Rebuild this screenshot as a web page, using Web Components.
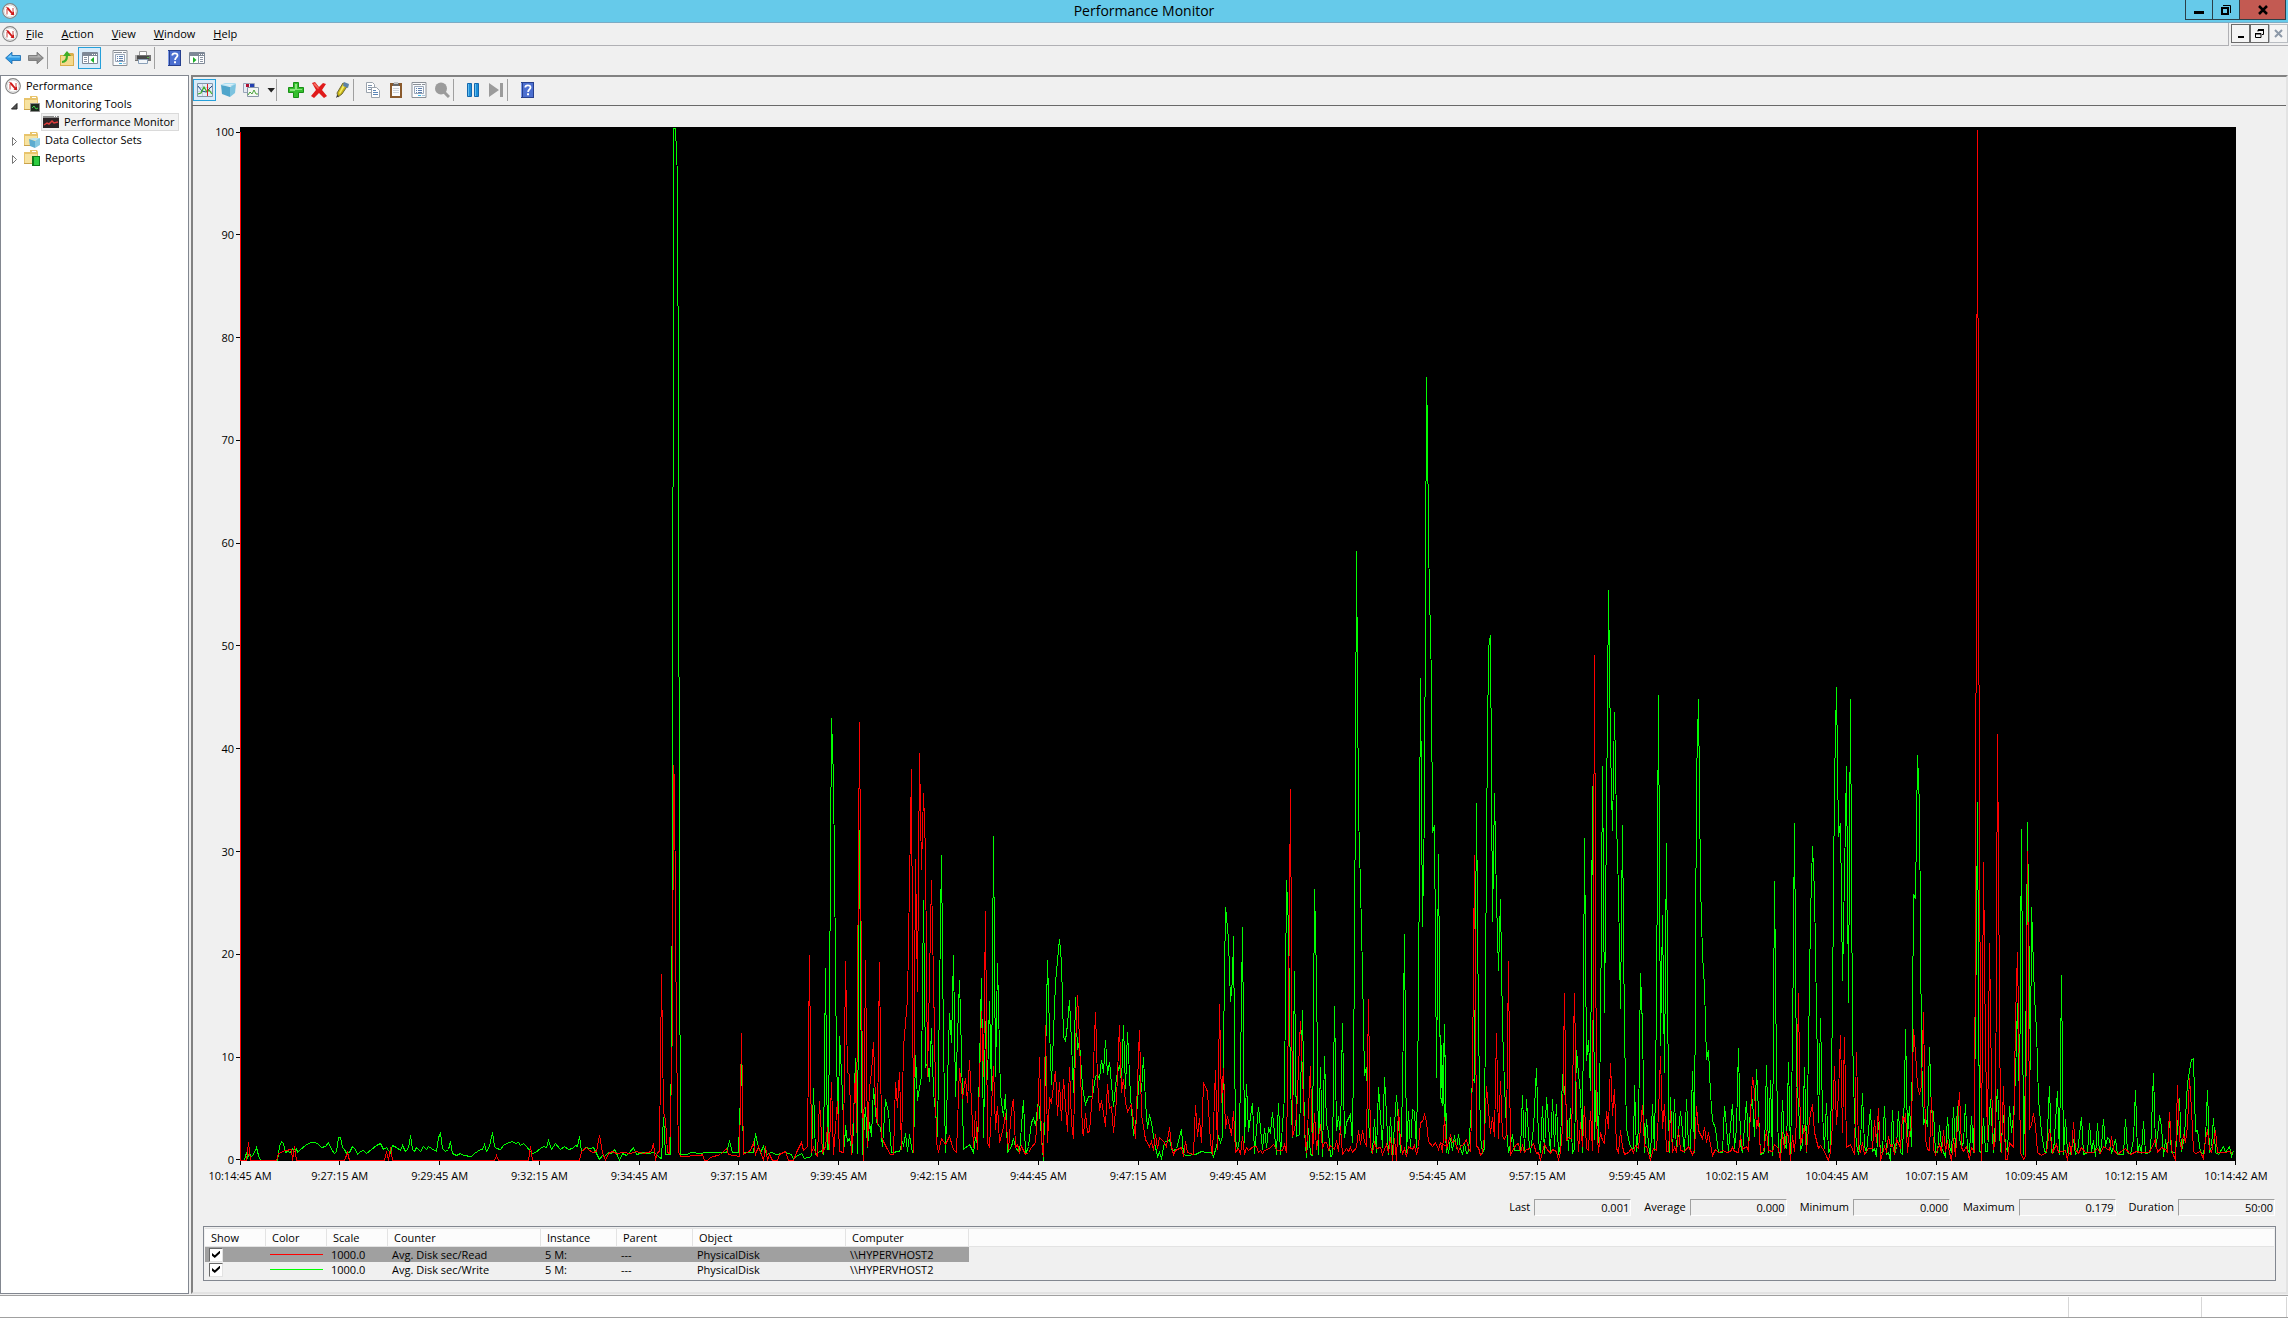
<!DOCTYPE html>
<html lang="en">
<head>
<meta charset="utf-8">
<title>Performance Monitor</title>
<style>
  html, body { margin: 0; height: 100%; }
  body {
    font: 11px/16px "Open Sans", "Noto Sans", sans-serif;
    color: #000;
    background: #f0f0f0;
    --face: #f0f0f0;
    --edge: #828790;
    --hot: #26a0da;
    --hot-fill: #d9ebf9;
  }
</style>
</head>
<body>
<pm-window>
  <pm-title-bar slot="title">Performance Monitor</pm-title-bar>
  <pm-menu-bar slot="menu"></pm-menu-bar>
  <pm-toolbar slot="toolbar" items="back forward | folder-up pane-left* ; props printer | help pane-right"></pm-toolbar>
  <pm-tree slot="tree">
    <pm-tree-item icon="gauge" level="0">Performance</pm-tree-item>
    <pm-tree-item icon="folder-tools" level="1" arrow="open">Monitoring Tools</pm-tree-item>
    <pm-tree-item icon="monitor" level="2" selected>Performance Monitor</pm-tree-item>
    <pm-tree-item icon="folder-sets" level="1" arrow="closed">Data Collector Sets</pm-tree-item>
    <pm-tree-item icon="folder-reports" level="1" arrow="closed">Reports</pm-tree-item>
  </pm-tree>
  <pm-view>
    <pm-toolbar slot="toolbar" items="chart* cube stack caret | plus cross marker | copy clipboard props zoom | pause next | help"></pm-toolbar>
    <pm-chart></pm-chart>
    <pm-stats></pm-stats>
    <pm-legend></pm-legend>
  </pm-view>
  <pm-status-bar slot="status"></pm-status-bar>
</pm-window>

<script>
/* ---------- icons, all on a 16 x 16 grid ---------- */

const FOLDER = `
  <path fill="#e8c46c" d="M0 2h6V0h7l1 2v12H0z"/>
  <path fill="#f7e3a1" d="M1 4h12v9H1z"/>
  <path fill="#c9a24c" d="M0 13h14v1H0z"/>
  <path fill="#fff" d="M8 1h4v1H8z"/>`;

const ICONS = {
  gauge: `
    <circle cx="8" cy="8" r="7.300" fill="#fff" stroke="#858585" stroke-width="1.200"/>
    <circle cx="8" cy="8" r="5.900" fill="none" stroke="#cfcfcf" stroke-width=".8"/>
    <path fill="none" stroke="#c9403c" d="M5 11.500V6M11 11V5"/>
    <path fill="#d01818" d="M4 4l2.500.5 4 5L12 8.500v3.500H8.500l1-1-4-4.500z"/>`,
  back: `
    <path fill="#2f9be6" stroke="#1668ac" stroke-width=".8" d="M.6 8L7 2.2V5.5h8.500v5H7v3.300z"/>
    <path fill="#7fcbf7" d="M2.500 7.600L6.300 4v2.300h8.500v1.300z"/>`,
  forward: `
    <path fill="#8e8e8e" stroke="#6e6e6e" stroke-width=".8" d="M15.400 8L9 2.200V5.500H.5v5H9v3.300z"/>
    <path fill="#b4b4b4" d="M13.500 7.600L9.700 4v2.300H1.200v1.300z"/>`,
  'folder-up': `
    <path fill="#d9ad4a" d="M1 5h5V3h8l1 1v12H1z"/>
    <path fill="#f5d98c" d="M2 6h12v9H2z"/>
    <path fill="none" stroke="#3fae27" stroke-width="2.200" d="M3 12c4 0 5-3 5-7"/>
    <path fill="#3fae27" d="M8 1l4 5H4z"/>`,
  'pane-left': `
    <path fill="#fff" stroke="#7e8896" d="M.5 2.500h15v11H.5z"/>
    <path fill="#7e8896" d="M1 3h14v3H1z"/><path fill="#fff" d="M10 4h1v1h-1zM12 4h1v1h-1zM14 4h1v1h-1z"/>
    <path fill="#8b95a4" d="M2 7h3v1H2zM2 9h3v1H2zM2 11h3v1H2zM6 6h1v8H6z"/>
    <path fill="#1fae2a" d="M12 7v6L8.500 10z"/>`,
  'pane-right': `
    <path fill="#fff" stroke="#7e8896" d="M.5 2.500h15v11H.5z"/>
    <path fill="#7e8896" d="M1 3h14v3H1z"/><path fill="#fff" d="M10 4h1v1h-1zM12 4h1v1h-1zM14 4h1v1h-1z"/>
    <path fill="#8b95a4" d="M11 7h3v1h-3zM11 9h3v1h-3zM11 11h3v1h-3zM9 6h1v8H9z"/>
    <path fill="#1fae2a" d="M4 7v6l3.500-3z"/>`,
  props: `
    <path fill="#fafcfe" stroke="#8b9097" d="M1 .5h14v15H1z"/>
    <path fill="#8b9097" d="M2 2h8v1H2zM11 2h3v1h-3z"/>
    <path fill="none" stroke="#9aa7b8" d="M3.500 4.500h9v7h-9z"/>
    <path fill="#5c7fae" d="M5 6h1v1H5zM7 6h4v1H7zM5 8h1v1H5zM7 8h4v1H7zM5 10h1v1H5zM7 10h4v1H7z"/>
    <path fill="#37b9ea" d="M7 13h3v1H7z"/><path fill="#a8c4d8" d="M11 13h3v1h-3z"/>`,
  printer: `
    <path fill="#fff" stroke="#9a9a9a" d="M4.500 1.500h7v4h-7z"/>
    <path fill="#747474" d="M0 5h16v6H0z"/><path fill="#4a4a4a" d="M2 6h12v3H2z"/>
    <path fill="#a9a9a9" d="M0 5h2v5H0z"/>
    <path fill="#f2f6fa" stroke="#8aa0b8" d="M3.500 9.500h9v4h-9z"/><path fill="#58b04a" d="M12 7h2v1h-2z"/>`,
  help: `
    <path fill="#27408f" d="M2 0h13v16H2z"/><path fill="#4c6fd0" d="M4 1h10v14H4z"/>
    <path fill="#7b98e6" d="M2 1h1v14H2z"/>
    <path fill="none" stroke="#fff" stroke-width="1.800" d="M6.300 5.600c0-3 5.200-3 5.200-.2 0 2-2.400 2-2.400 4.600"/>
    <path fill="#fff" d="M8 11.300h2v2H8z"/>`,
  chart: `
    <path fill="#e3edf5" stroke="#8297ab" d="M.5 1.500h15v13H.5z"/>
    <path stroke="#c3d1dd" d="M1 5.500h14M1 9.500h14M5.500 2v12"/>
    <path fill="none" stroke="#234b8f" d="M1 4l4 5 4 1 6-6"/>
    <path fill="none" stroke="#3fae27" stroke-width="1.200" d="M1 12l3-1 3-6 3 5 2-2 3 4"/>
    <path fill="#e02020" d="M10 2h1v12h-1z"/>`,
  cube: `
    <path fill="#a9dcf0" d="M0 3l5-2h11l-2 3H3z"/><path fill="#4fa5cb" d="M1 3l9 2v10l-8-3z"/>
    <path fill="#7cc3df" d="M10 5l6-3-1 9-5 4z"/><path fill="#d7eff8" d="M1 3l5-1h8l-4 2z"/>`,
  stack: `
    <path fill="#e6ebf3" stroke="#98a5b8" d="M.5 1.500h11v9H.5z"/>
    <path fill="#b01030" d="M3 2h3v3H3z"/><path fill="#2440b0" d="M7 2h4v3H7z"/>
    <path fill="#f4f7f2" stroke="#8a97a8" d="M4.500 5.500h11v9h-11z"/>
    <path fill="none" stroke="#4aa53a" d="M5 13l2-3 2 2 2-4 2 4h2"/>`,
  caret: `<path fill="#222" d="M4.500 6h7.500L8.200 10.500z"/>`,
  plus: `
    <path fill="#35c02d" stroke="#198f16" d="M5.500 .5h5v5h5v5h-5v5h-5v-5h-5v-5h5z"/>
    <path fill="#8be67e" d="M7 2h2v5h5v1H7v1H2V7h5z"/>`,
  cross: `
    <path fill="#e01b1b" d="M1 1l3-1 4 5 4-4 3 1-4 6 5 6-3 2-5-5-5 5-3-2 5-6z"/>
    <path fill="#f36a5f" d="M2 2l2-1 4 5-1 1z"/>`,
  marker: `
    <path fill="#c8b414" stroke="#6d6a3c" d="M9 1l5 2-6 9-4 3-1-4z"/>
    <path fill="#f4ea62" d="M9 3l2 1-5 8-1-1z"/><path fill="#5d82a8" d="M10 0l5 2-1 4-5-2z"/>
    <path fill="#333" d="M3 13l2 1-3 2z"/>`,
  copy: `
    <path fill="#fff" stroke="#9aa3ad" d="M1.500 .5h6l2 2v8h-8z"/>
    <path fill="#7d93ad" d="M3 3h4v1H3zM3 5h5v1H3zM3 7h5v1H3z"/>
    <path fill="#fff" stroke="#9aa3ad" d="M6.500 5.500h5l3 3v7h-8z"/>
    <path fill="#5b86b8" d="M8 8h3v1H8zM8 10h5v1H8zM8 12h5v1H8z"/>`,
  clipboard: `
    <path fill="#8a5a2c" d="M2 1h12v15H2z"/><path fill="#fbfbfb" d="M4 4h8v10H4z"/>
    <path fill="#6b6b6b" d="M5 1h6v3H5z"/><path fill="#c4c4c4" d="M6 0h4v2H6z"/>
    <path fill="#cdd3da" d="M5 6h6v1H5zM5 8h6v1H5zM5 10h6v1H5z"/>`,
  zoom: `
    <circle cx="7" cy="6.500" r="6" fill="#9b9b9b"/><path stroke="#9b9b9b" stroke-width="3" d="M10 10l5 5"/>`,
  pause: `
    <path fill="#1e8fd8" stroke="#1468ad" d="M2.500 1.500h4v13h-4zM9.500 1.500h4v13h-4z"/>
    <path fill="#63bdf0" d="M3 2h1v12H3zM10 2h1v12h-1z"/>`,
  next: `<path fill="#9b9b9b" d="M1 1l10 7-10 7zM12 1h3v14h-3z"/>`,
  monitor: `
    <path fill="#2c2426" d="M0 2h16v12H0z"/><path fill="#8c8c8c" d="M0 2h16v2H0z"/>
    <path fill="#fff" d="M11 2h1v1h-1zM13 2h1v1h-1z"/>
    <path fill="none" stroke="#e23b3b" stroke-width="1.500" d="M1 11l3-2 2 1 3-3 2 2 4-1"/>`,
  'folder-tools': FOLDER + `
    <path fill="#1c2a1e" stroke="#8a8a8a" d="M6.500 7.500h9v8h-9z"/>
    <path fill="none" stroke="#41d24d" d="M8 12l2-2 2 3 2-1"/>`,
  'folder-sets': FOLDER + `
    <path fill="#bfe4f2" d="M5 7l4-1h7l-3 3z"/><path fill="#5cacd0" d="M5 7l6 2v7l-5-2z"/>
    <path fill="#86c9e2" d="M11 9l5-3v7l-5 3z"/>`,
  'folder-reports': FOLDER + `
    <path fill="#0c7a18" d="M8 6h8v10H8z"/><path fill="#2ecc40" d="M10 7h5v8h-5z"/>`
};

class PmIcon extends HTMLElement {
  connectedCallback() {
    this.attachShadow({ mode: 'open' }).innerHTML = `
      <style>
        :host { display: block; width: 16px; height: 16px; flex: none; }
        svg { display: block; }
      </style>
      <svg width="16" height="16" viewBox="0 0 16 16" aria-hidden="true">${ICONS[this.getAttribute('name')]}</svg>
    `;
  }
}

/* ---------- window frame ---------- */

class PmWindow extends HTMLElement {
  connectedCallback() {
    this.attachShadow({ mode: 'open' }).innerHTML = `
      <style>
        :host { display: flex; flex-direction: column; height: 100vh; overflow: hidden; }
        .body { flex: 1; min-height: 0; display: flex; gap: 2px; }
        ::slotted(pm-tree) { flex: none; }
        ::slotted(pm-view) { flex: 1; min-width: 0; }
      </style>
      <slot name="title"></slot>
      <slot name="menu"></slot>
      <slot name="toolbar"></slot>
      <div class="body">
        <slot name="tree"></slot>
        <slot></slot>
      </div>
      <slot name="status"></slot>
    `;
  }
}

class PmTitleBar extends HTMLElement {
  connectedCallback() {
    this.attachShadow({ mode: 'open' }).innerHTML = `
      <style>
        :host {
          display: grid; grid-template-columns: 1fr auto 1fr;
          height: 22px; background: #66caea; border-bottom: 1px solid #7cabc4;
        }
        pm-icon { margin: 3px 0 0 2px; }
        h1 { margin: 0; font-size: 14px; line-height: 22px; font-weight: 400; }
        .controls { display: flex; justify-content: flex-end; margin-right: 2px; height: 20px; }
        button {
          width: 28px; padding: 0; margin-left: -1px; border: 1px solid #2b3f48; border-top: 0;
          background: none; display: grid; place-items: center;
        }
        .close { width: 47px; background: #c35a52; }
      </style>
      <pm-icon name="gauge"></pm-icon>
      <h1><slot></slot></h1>
      <div class="controls">
        <button aria-label="Minimize"><svg width="12" height="12"><path d="M1 7h10v3H1z"/></svg></button>
        <button aria-label="Restore"><svg width="12" height="12"><path fill="none" stroke="#000" stroke-width="2" d="M2 4h6v6H2z"/><path fill="none" stroke="#000" d="M3 1.500h7.500V9"/></svg></button>
        <button class="close" aria-label="Close"><svg width="12" height="12"><path stroke="#000" stroke-width="2.500" d="M2 2l8 8M10 2l-8 8"/></svg></button>
      </div>
    `;
  }
}

class PmMenuBar extends HTMLElement {
  connectedCallback() {
    const items = ['File', 'Action', 'View', 'Window', 'Help'];
    this.attachShadow({ mode: 'open' }).innerHTML = `
      <style>
        :host { display: flex; gap: 2px; height: 23px; }
        .menu { flex: 1; display: flex; gap: 18px; align-items: center; padding-left: 2px;
                border: solid #b0b0b4; border-width: 0 1px 1px 0; }
        pm-icon { margin-right: -10px; }
        button { font: inherit; color: inherit; padding: 0; border: 0; background: none; }
        .mdi { display: flex; border-bottom: 1px solid #b0b0b4; padding-top: 1px; }
        .mdi button { box-sizing: border-box; width: 19px; height: 19px; border: 1px solid #6b6b6b;
                      background: #f4f4f4; display: grid; place-items: center; }
        .mdi button:last-child { border-color: #b9bdc2; }
      </style>
      <div class="menu">
        <pm-icon name="gauge"></pm-icon>
        ${items.map(t => `<button><u>${t[0]}</u>${t.slice(1)}</button>`).join('')}
      </div>
      <div class="mdi">
        <button aria-label="Minimize child"><svg width="9" height="9"><path d="M2 7h6v2H2z"/></svg></button>
        <button aria-label="Restore child"><svg width="9" height="9"><path fill="none" stroke="#000" d="M3 2.500V1h5.500v4.500H7M.5 4.500h5.500v4H.5z"/><path d="M3 0h6v2H3zM0 4h6v1.500H0z"/></svg></button>
        <button aria-label="Close child"><svg width="9" height="9"><path stroke="#8d99a8" stroke-width="2" d="M1 1l7 7M8 1L1 8"/></svg></button>
      </div>
    `;
  }
}

// items: icon names, "*" marks a pressed button, "|" a rule and ";" a blank gap
class PmToolbar extends HTMLElement {
  connectedCallback() {
    const cells = this.getAttribute('items').split(' ').map(item => {
      if (item === '|') return '<i class="rule"></i>';
      if (item === ';') return '<i class="gap"></i>';
      const name = item.replace('*', '');
      const cls = item.endsWith('*') ? 'on' : name === 'caret' ? 'caret' : '';
      return `<button class="${cls}" aria-label="${name}"><pm-icon name="${name}"></pm-icon></button>`;
    });
    this.attachShadow({ mode: 'open' }).innerHTML = `
      <style>
        :host { display: flex; align-items: flex-start; padding: 1px 0 6px 1px; height: 22px; }
        button { box-sizing: border-box; width: 23px; height: 22px; padding: 0; border: 1px solid transparent;
                 background: none; display: grid; place-items: center; flex: none; }
        .on { border-color: var(--hot); background: var(--hot-fill); }
        .caret { width: 14px; overflow: hidden; }
        .rule { width: 1px; height: 22px; margin-right: 7px; background: #a0a0a0; }
        .gap { width: 7px; }
      </style>
      ${cells.join('')}
    `;
  }
}

class PmStatusBar extends HTMLElement {
  connectedCallback() {
    this.attachShadow({ mode: 'open' }).innerHTML = `
      <style>
        :host { display: flex; height: 20px; margin-top: 1px; border: solid #a0a0a0; border-width: 1px 0;
                background: #fff; padding: 1px 1px 0 0; }
        span { border-right: 1px solid #d7d7d7; }
        .wide { flex: 1; } .mid { width: 132px; } .end { width: 84px; }
      </style>
      <span class="wide"></span><span class="mid"></span><span class="end"></span>
    `;
  }
}

/* ---------- console tree ---------- */

class PmTree extends HTMLElement {
  connectedCallback() {
    this.setAttribute('role', 'tree');
    this.attachShadow({ mode: 'open' }).innerHTML = `
      <style>
        :host { display: block; box-sizing: border-box; width: 189px; padding-top: 1px;
                background: #fff; border: 1px solid var(--edge); }
      </style>
      <slot></slot>
    `;
  }
}

class PmTreeItem extends HTMLElement {
  connectedCallback() {
    this.setAttribute('role', 'treeitem');
    const arrow = {
      open: '<path fill="#555" stroke="#222" d="M7 3.500V9H1.500z"/>',
      closed: '<path fill="#fff" stroke="#777" d="M2.500 1.500v8l4-4z"/>'
    }[this.getAttribute('arrow')] || '';
    const indent = [0, 19, 38][this.getAttribute('level')];
    this.attachShadow({ mode: 'open' }).innerHTML = `
      <style>
        :host { display: flex; align-items: center; height: 18px; padding-left: ${indent}px; }
        svg { margin: 3px 0 0 -10px; width: 10px; flex: none; }
        .row { display: flex; align-items: center; gap: 5px; box-sizing: border-box; height: 18px;
               padding: 0 3px 0 1px; margin-left: 2px; border: 1px solid transparent; white-space: nowrap; }
        :host([selected]) .row { background: #f2f2f2; border-color: #dadada; }
      </style>
      ${arrow && `<svg width="10" height="11">${arrow}</svg>`}
      <div class="row"><pm-icon name="${this.getAttribute('icon')}"></pm-icon><slot></slot></div>
    `;
  }
}

/* ---------- monitor view ---------- */

class PmView extends HTMLElement {
  connectedCallback() {
    this.attachShadow({ mode: 'open' }).innerHTML = `
      <style>
        :host { display: flex; flex-direction: column; box-sizing: border-box; border: 2px solid;
                border-color: #828282 #e3e3e3 #e3e3e3 #828282; }
        header { border-bottom: 1px solid #696969; padding-top: 1px; height: 27px; margin-left: -1px; }
        ::slotted(pm-chart) { flex: 1; min-height: 0; }
      </style>
      <header><slot name="toolbar"></slot></header>
      <slot></slot>
    `;
  }
}

/*
 * Samples of both counters, one block per stretch of the recording.
 * x: where the block starts on the plot, base: the block's zero level,
 * unit: block units per pixel of height. Across, there are 3 units per pixel.
 */
const BLOCKS = [
  { x: -50, base: 94, unit: 3,
    write: `163,94 168,70 173,86 178,74 184,82 190,76 199,55 206,80 211,94 262,94 268,52 273,37 280,42 286,70 292,66 300,70 306,58 313,68
      318,58 323,70 330,62 345,48 362,41 375,40 384,46 395,56 405,52 416,40 425,62 434,72 440,68 445,26 451,26 457,54 463,60 470,72
      478,70 487,53 495,60 502,75 510,68 520,64 528,72 545,60 560,48 570,42 580,62 590,56 600,74 608,50 618,54 630,64 638,50 645,66
      652,62 657,42 661,20 666,60 674,66 680,56 690,66 700,52 708,60 715,52 725,58 738,66 744,24 752,14 757,58 765,66 775,62 782,36
      788,74 800,78 810,72 820,78 845,82 852,72 862,68 870,60 876,62 884,46 890,66 898,52 907,10 913,52 920,58 930,62 940,50 950,42
      966,38 975,42 985,40 992,48 1000,44 1010,52 1020,66 1026,74 1035,70 1050,58 1060,52 1068,56 1076,34 1084,60 1096,44 1110,62
      1122,52 1134,60 1146,58 1155,48 1162,52 1168,22 1174,66 1186,54 1200,58 1210,56 1220,72 1228,92 1236,80 1244,82 1254,70 1264,74
      1274,60 1282,78 1289,94 1298,74 1308,78 1318,70 1330,56 1340,76 1352,74 1364,70 1376,74 1390,70 1400,76 1408,84`,
    read: `151,94 168,94 176,40 181,94 260,94 266,74 285,64 303,62 307,94 313,52 320,94 464,94 471,70 478,94 584,94 590,68 595,94 601,54
      607,94 913,94 919,80 926,94 1015,94 1021,52 1027,94 1168,94 1174,68 1188,56 1196,60 1206,70 1220,66 1228,18 1236,70 1246,94
      1254,72 1266,66 1280,72 1300,70 1320,74 1340,68 1360,72 1384,68 1390,42` },
  { x: 380, base: 1443, unit: 3,
    write: `124,1436 130,1310 136,1426 152,1426 156,600 159,-1656 165,-1656 171,-1509 174,-740 177,700 180,1426 200,1424 215,1420
      240,1422 255,1420 300,1418 318,1420 328,1386 338,1420 355,1420 364,1152 370,1420 400,1420 407,1362 414,1404 422,1420 430,1400
      440,1424 455,1418 470,1424 495,1420 515,1424 520,1440 528,1430 545,1422 553,1436 575,1430 580,1224 586,1426 605,1414 610,1424
      616,864 622,1410 626,1410 634,114 640,300 644,560 650,1150 654,1320 658,1068 664,1180 673,1400 676,1338 682,1385 688,1378
      697,1418 706,1135 712,1422 718,450 721,920 726,1424 736,1282 742,1405 749,1330 755,1370 760,1225 768,1330 780,1345 788,1400
      797,1260 806,1296 815,1420 838,1415 846,1386 850,1400 856,1362 862,1415 868,1366 876,1418 880,1418 886,1126 893,1264 904,1190
      910,660 916,1164 922,1150 928,1206 934,1045 940,1240 946,1295 952,1372 964,525 970,1098 976,1418 988,1000 994,1090 1000,825
      1006,1252 1018,900 1024,1120 1030,1410 1048,1394 1060,1420 1066,1375 1072,1395 1076,1290 1084,894 1090,1375 1096,1022 1102,1200
      1108,964 1114,1234 1120,468 1126,1190 1132,850 1140,1245 1150,1310 1156,1242 1162,1418 1174,1400 1180,1378 1186,1405 1198,1420
      1210,1260 1216,1424 1226,1400 1234,1330 1240,1318 1246,1338 1254,1260`,
    read: `106,1444 112,1418 118,1416 124,882 130,1300 136,1320 142,1418 148,1422 152,1326 156,1030 160,255 164,310 168,1100 174,1416
      180,1430 240,1428 248,1425 253,1443 263,1443 270,1434 300,1424 318,1406 325,1424 358,1430 364,1059 370,1424 390,1412 400,1388
      406,1424 415,1400 424,1424 431,1443 437,1400 443,1443 449,1424 457,1443 471,1443 478,1424 495,1416 504,1443 520,1443 530,1418
      544,1390 550,1414 563,1400 568,825 574,1418 580,1404 592,1430 599,1264 606,1420 616,1400 623,1345 628,1410 634,1206 640,1424
      652,1264 658,1415 670,1420 676,843 682,1180 688,1186 694,1424 706,1178 710,1360 718,126 724,920 730,1444 736,840 742,1400
      748,1225 755,1180 760,1086 766,1265 772,1335 778,846 784,1370 790,1385 800,1405 812,1424 820,1424 827,1206 832,1285 838,1176
      844,1410 850,1100 862,960 874,267 880,1420 886,537 892,936 898,219 904,570 910,339 916,520 922,1190 934,600 940,900 948,1390
      956,1418 965,1378 976,1395 988,1370 1000,1410 1008,1418 1018,1164 1028,1258 1036,1195 1042,1270 1048,1140 1060,1405 1066,1294
      1072,1410 1084,994 1090,1190 1096,693 1102,1390 1108,1405 1120,1158 1126,1350 1132,1278 1138,1388 1150,1345 1156,1302 1164,1410
      1174,1290 1180,1258 1186,1405 1192,1395 1198,1418 1204,1400 1215,1424 1225,1420 1234,1405 1246,1390 1254,1260` },
  { x: 790, base: 1443, unit: 3,
    write: `29,1300 40,1444 46,1150 52,840 58,1050 64,1215 76,910 88,778 94,850 100,1070 106,1084 112,1035 118,960 124,1090 130,1238
      136,950 142,1110 148,1085 156,1220 166,1275 176,1252 186,1250 196,1190 202,1184 208,1200 214,1140 220,1178 226,1080 232,1185
      238,1145 250,1282 258,1195 268,1155 274,1210 280,1036 286,1228 292,1056 300,1250 310,1368 318,1310 328,1184 334,1236 340,1132
      346,1270 352,1348 358,1305 364,1330 374,1390 382,1430 388,1418 394,1436 404,1390 418,1380 428,1416 440,1408 454,1350 460,1424
      470,1428 495,1426 515,1416 530,1420 544,1418 550,1432 560,1400 566,1370 570,1390 576,1370 580,1100 587,682 594,780 600,966
      606,900 610,768 616,1380 622,1410 628,1380 637,742 643,1390 649,1212 656,1355 667,1270 673,1422 685,1282 697,1410 703,1348
      709,1405 716,1346 721,1360 728,1298 739,1426 745,1268 751,1426 763,1250 770,600 776,740 781,1220 787,1375 794,874 800,1370
      808,1365 817,990 823,1355 829,1434 835,1348 841,1424 847,1428 854,628 860,890 866,1426 872,1160 878,1430 884,1128 890,1335
      896,1356 902,1432 907,1428 913,978 919,1352 925,1310 931,1365 938,1030 944,1375 950,1330 962,1306 968,1388 974,860 979,-387
      986,400 992,620 998,880 1004,1188 1009,1160 1015,1330 1024,1418 1027,1415 1033,1318 1039,1418 1046,1220 1058,1405 1064,1190
      1076,1426 1082,1312 1088,1426 1100,1245 1112,1418 1118,1240 1123,762 1128,1418 1136,1294 1142,1408 1148,1290 1154,1296
      1160,1404 1166,980 1171,-6 1177,740 1183,390 1189,-909 1192,-750 1195,-432 1198,-240 1201,-150 1204,20 1207,460 1213,435
      1220,1195 1225,522 1231,1250 1237,1275 1243,1032 1249,1420`,
    read: `28,1131 34,1385 40,1430 47,1036 53,1390 59,1258 64,1270 76,1174 82,1308 88,1206 94,1322 100,1197 112,1356 118,1161 124,1330
      130,1378 136,1100 142,945 148,1080 156,1358 160,1366 166,1302 172,1360 178,1355 187,1240 196,996 202,1200 208,1294 214,1262
      226,1342 232,1212 238,1288 244,1280 250,1360 258,1260 268,1036 274,1240 280,1198 286,1268 292,1296 304,1276 316,1378 322,1210
      328,1050 334,1305 346,1380 358,1400 364,1385 370,1412 376,1366 382,1408 388,1375 400,1386 408,1400 418,1345 424,1400 430,1426
      436,1412 454,1405 460,1430 466,1386 472,1420 490,1426 496,1275 502,1370 508,1318 514,1390 520,1210 532,1236 542,1390 548,1426
      556,1170 562,1410 568,972 574,1270 580,1165 586,1348 592,1310 603,1368 610,1294 617,1418 626,1408 631,1425 637,1372 643,1426
      650,1405 656,1412 670,1400 678,1400 686,1420 692,1412 698,1422 704,1412 718,1408 730,1396 742,1412 757,1412 763,1394 769,1420
      775,1000 781,327 787,1370 793,1350 800,1310 811,1023 823,1350 830,1418 841,1158 847,1424 853,1300 859,1410 870,1335 876,1408
      884,1390 890,1388 896,1410 902,1398 914,1410 920,1382 926,1415 932,1342 938,1424 950,1406 956,1415 962,1405 968,1418 978,1405
      985,1354 991,1394 997,1352 1003,1385 1009,1400 1015,957 1021,1400 1027,1420 1033,1388 1040,1408 1050,1405 1058,1424 1070,1396
      1076,1418 1082,1375 1088,1444 1094,1378 1100,1444 1106,1288 1112,1385 1118,1424 1124,1408 1130,1430 1136,1402 1148,1410
      1154,1398 1160,1426 1166,1400 1171,1330 1177,1325 1183,1305 1189,1325 1196,1385 1208,1402 1215,1390 1225,1410 1231,1390
      1237,1420 1243,1312 1249,1400` },
  { x: 1200, base: 1520, unit: 2.53,
    write: `1,1200 7,1380 13,1173 19,1470 25,1502 31,1465 37,1495 43,1458 49,1490 55,1455 61,1490 67,1505 73,1478 80,1503 86,1500 92,1420
      97,1310 103,1322 109,615 115,1185 121,1460 127,1500 132,1490 139,700 146,225 151,190 157,916 163,590 169,860 176,1040 181,856
      187,1180 193,1330 199,1440 205,1500 211,1480 217,1455 223,1495 241,1495 247,1352 253,1500 259,1363 266,1460 272,1500 280,1440
      288,1284 295,1470 301,1500 307,1382 313,1502 319,1357 331,1500 337,1362 343,1484 349,1375 355,1505 361,1480 367,1300 373,1340
      380,1390 386,1495 392,1385 398,1502 403,1490 409,1238 415,1300 421,1350 427,1500 433,702 439,1268 446,1215 451,1343 457,572
      463,1466 469,1300 475,1475 481,1210 487,520 493,1145 499,650 505,76 511,470 517,684 523,384 529,660 535,840 541,1135 547,670
      553,1200 560,1440 568,1478 574,1490 580,1490 583,1328 589,1498 595,1440 601,1045 607,1180 613,1500 619,1415 625,1480 631,1510
      637,1375 643,1495 649,1125 655,341 661,1228 667,898 673,1298 679,716 685,1390 688,1500 691,1357 697,1500 703,1362 710,1500
      721,1393 733,1500 739,1362 746,1485 751,1490 757,1293 763,1500 769,550 775,350 781,820 787,1000 793,1080 799,1265 805,1240
      811,1350 817,1420 825,1440 835,1500 848,1500 854,1382 866,1495 877,1376 884,1490 889,1440 895,1235 901,1480 908,1500 919,1368
      925,1490 931,1385 937,1365 943,1460 949,1287 961,1505 973,1500 979,1278 985,1500 991,1315 997,1508 1003,812 1009,1290 1015,1500
      1022,1500 1027,1366 1033,1480 1039,1490 1045,1270 1051,1505 1057,1230 1063,665 1069,1320 1075,1375 1081,1495 1087,1480
      1093,1282 1099,1500 1105,1240 1111,900 1117,722 1123,840 1129,1140 1135,1425 1141,1158 1147,1400 1153,1490 1159,1374 1165,1500
      1171,1490 1177,1120 1183,560 1189,321 1195,700 1201,664 1207,1065 1213,800 1219,520 1225,1120 1231,352 1237,1200 1243,1410
      1249,1480 1255,1505`,
    read: `1,1475 7,1500 13,1410 19,1490 31,1458 37,1475 43,1470 55,1498 61,1485 70,1480 79,1468 85,1490 92,1498 97,1300 103,745 109,1485
      115,1488 121,1508 128,1500 134,1460 139,1330 145,1390 151,1452 157,1412 163,1460 169,1196 175,1465 181,1317 187,1460 193,1468
      199,1455 205,1014 211,1508 220,1490 229,1480 235,1476 241,1500 247,1482 253,1500 260,1492 272,1490 280,1478 288,1502 295,1500
      301,1520 313,1480 320,1490 332,1502 338,1492 350,1498 356,1520 362,1498 368,1440 373,1095 379,1470 386,1463 395,1465 404,1095
      409,1390 415,1498 421,1425 427,1485 433,1382 440,1490 446,1495 451,1394 457,1495 463,240 470,1420 475,1500 480,1450 487,1470
      493,1478 499,1397 505,1440 511,1272 517,1405 523,1338 530,1490 536,1500 541,1445 547,1485 553,1505 566,1500 574,1490 580,1500
      587,1482 595,1490 601,1440 607,1378 613,1485 620,1485 631,1520 640,1490 649,1495 655,1400 661,1255 667,1440 673,1376 679,1498
      685,1498 691,1390 697,1500 703,1488 710,1498 716,1442 722,1495 733,1498 746,1485 757,1505 763,1495 769,1382 775,1445 787,1465
      793,1437 799,1475 805,1450 811,1480 818,1508 826,1492 835,1500 850,1495 860,1500 870,1496 878,1488 884,1498 895,1500 901,1458
      907,1492 919,1484 925,1494 931,1400 937,1308 943,1345 949,1440 955,1412 961,1502 970,1498 979,1443 985,1495 997,1498 1004,1480
      1015,1490 1021,1520 1027,1450 1033,1490 1039,1450 1045,1460 1051,1520 1057,1458 1063,1498 1069,1420 1075,1095 1081,1480
      1087,1460 1093,1432 1099,1498 1105,1440 1111,1400 1117,1378 1123,1450 1135,1490 1141,1482 1153,1498 1159,1510 1165,1520
      1171,1500 1177,1430 1183,1280 1189,1430 1195,1350 1201,1200 1207,1448 1213,1206 1219,1487 1231,1480 1243,1505 1249,1244` },
  { x: 1600, base: 1503, unit: 3,
    write: `56,1485 62,1450 67,1300 73,1460 79,1480 91,1348 97,1475 104,1466 110,1490 115,1385 121,1480 127,1480 133,1338 139,1485
      146,1480 151,1503 157,1350 163,1485 169,1460 175,1353 181,1480 187,1486 193,1300 196,1107 202,1430 208,1338 214,1460 220,703
      226,718 232,285 238,440 243,1180 250,1395 256,1375 262,1400 268,1161 274,1360 280,1355 286,1480 292,1480 298,1398 304,1465
      310,1480 316,1490 322,1372 328,1460 334,1480 340,1342 346,1470 352,1338 358,1440 364,1460 370,1450 376,1332 382,1470 388,1480
      394,1368 400,1480 404,1335 409,820 412,426 418,1475 424,1480 430,1374 436,1475 442,1475 452,1318 460,1480 472,1287 480,1475
      490,1365 496,1460 502,1475 508,1338 514,1420 520,1368 526,1250 533,1030 537,1340 545,507 551,1485 556,1250 562,486 570,1230
      575,741 582,1010 590,1110 596,1320 604,1420 612,1475 620,1478 628,1278 634,1480 640,1478 652,1293 658,1485 664,945 670,1485
      676,1377 682,1480 692,1485 700,1440 706,1485 712,1480 724,1372 730,1485 742,1480 748,1390 754,1480 760,1444 766,1490 772,1390
      778,1482 784,1460 791,1377 797,1460 802,1435 808,1440 815,1482 826,1440 832,1485 850,1485 857,1377 863,1480 870,1485 880,1440
      887,1290 893,1480 898,1455 904,1482 911,1384 917,1482 930,1480 941,1240 947,1460 953,1430 959,1368 965,1400 970,1490 977,1440
      983,1475 989,1380 995,1480 1005,1480 1010,1450 1018,1315 1024,1475 1032,1430 1042,1270 1054,1200 1060,1197 1066,1415 1072,1412
      1080,1478 1090,1482 1096,1440 1102,1290 1108,1478 1114,1460 1120,1374 1126,1480 1136,1486 1150,1460 1156,1480 1168,1460
      1174,1490 1181,1472`,
    read: `55,1470 61,1478 67,1450 73,1485 85,1468 98,1468 103,1384 109,1450 115,1344 121,1503 133,1460 139,1475 145,1432 151,1460
      157,1456 163,1485 169,1440 181,1465 187,1372 193,1385 196,1358 202,1480 208,1420 214,1400 220,1107 226,1180 232,1280 238,1303
      243,1280 250,1056 256,1440 262,1470 268,1472 274,1311 280,1470 286,1485 298,1455 304,1480 310,1413 316,1475 322,1444 328,1480
      334,1503 340,1438 346,1492 358,1297 364,1465 370,1475 380,1462 388,1500 394,1465 404,1478 407,700 412,-1590 418,620
      424,1503 430,606 436,1170 442,1440 448,849 454,1270 460,1470 466,1440 472,222 480,1420 484,1480 490,1278 497,1500 503,1500
      508,1450 519,1465 526,1080 532,876 540,1480 549,1500 556,1490 562,573 568,1410 574,1395 580,1362 586,1400 592,1478 604,1488
      618,1478 628,1410 636,1480 650,1455 656,1480 676,1472 682,1503 688,1450 694,1485 700,1387 706,1470 715,1482 725,1464 735,1478
      760,1478 772,1468 782,1482 791,1462 808,1472 815,1432 821,1470 832,1485 846,1474 856,1468 870,1485 888,1475 900,1480 925,1480
      935,1466 947,1440 953,1480 965,1465 976,1470 983,1480 989,1356 995,1470 1005,1503 1013,1275 1019,1440 1025,1470 1031,1425
      1037,1450 1042,1400 1048,1254 1054,1350 1060,1475 1066,1482 1080,1475 1090,1500 1096,1440 1102,1410 1108,1470 1114,1480
      1126,1412 1132,1478 1150,1480 1172,1476 1178,1485` }
];

const PLOT_W = 1996;
const PLOT_H = 1035;

function tracePoints(counter) {
  return BLOCKS.flatMap(b => b[counter].trim().split(/\s+/).map(pair => {
    const [x, y] = pair.split(',').map(Number);
    const px = b.x + Math.floor(x / 3);
    const py = PLOT_H - 1 - Math.round((b.base - y) / b.unit);
    return `${px + 0.5},${Math.max(1, Math.min(PLOT_H - 1, py)) + 0.5}`;
  })).join(' ');
}

class PmChart extends HTMLElement {
  connectedCallback() {
    const values = [100, 90, 80, 70, 60, 50, 40, 30, 20, 10, 0];
    const times = ['10:14:45', '9:27:15', '9:29:45', '9:32:15', '9:34:45', '9:37:15', '9:39:45', '9:42:15',
      '9:44:45', '9:47:15', '9:49:45', '9:52:15', '9:54:45', '9:57:15', '9:59:45', '10:02:15', '10:04:45',
      '10:07:15', '10:09:45', '10:12:15', '10:14:42'];
    this.attachShadow({ mode: 'open' }).innerHTML = `
      <style>
        :host { display: grid; grid-template: minmax(0, 1fr) auto / 47px minmax(0, 1fr);
                padding: 21px 50px 0 0; }
        svg { display: block; width: 100%; height: 100%; background: #000; }
        polyline, line { fill: none; shape-rendering: crispEdges; vector-effect: non-scaling-stroke; }
        .y { display: flex; flex-direction: column; justify-content: space-between; padding: 5px 0 1px; }
        .y div { height: 0; display: flex; align-items: center; justify-content: flex-end; gap: 2px; }
        .y div::after { content: ""; width: 4px; height: 1px; background: #000; }
        .x { grid-column: 2; display: flex; justify-content: space-between; height: 38px; }
        .x div { width: 0; display: flex; flex-direction: column; align-items: center; gap: 3px; white-space: nowrap; }
        .x div::before { content: ""; width: 1px; height: 4px; background: #000; }
      </style>
      <div class="y">${values.map(v => `<div><span>${v}</span></div>`).join('')}</div>
      <svg viewBox="0 0 ${PLOT_W} ${PLOT_H}" preserveAspectRatio="none" role="img" aria-label="Disk latency">
        <polyline stroke="#0f0" points="${tracePoints('write')}"/>
        <polyline stroke="#f00" points="${tracePoints('read')}"/>
        <line stroke="#f00" x1="0.5" y1="5" x2="0.5" y2="${PLOT_H}"/>
      </svg>
      <div class="x">${times.map(t => `<div><span>${t} AM</span></div>`).join('')}</div>
    `;
  }
}

class PmStats extends HTMLElement {
  connectedCallback() {
    const stats = [['Last', '0.001'], ['Average', '0.000'], ['Minimum', '0.000'], ['Maximum', '0.179'], ['Duration', '50:00']];
    this.attachShadow({ mode: 'open' }).innerHTML = `
      <style>
        :host { display: flex; justify-content: flex-end; gap: 13px; padding: 0 11px 10px 0; line-height: 15px; }
        div { display: flex; gap: 4px; }
        output { box-sizing: border-box; width: 97px; height: 17px; padding-right: 1px; text-align: right;
                 border: 1px solid; border-color: #a0a0a0 #fff #fff #a0a0a0; }
      </style>
      ${stats.map(([name, value]) => `
        <div><label for="${name}">${name}</label><output id="${name}">${value}</output></div>`).join('')}
    `;
  }
}

class PmLegend extends HTMLElement {
  connectedCallback() {
    const columns = [['Show', 61], ['Color', 61], ['Scale', 61], ['Counter', 153], ['Instance', 76], ['Parent', 76], ['Object', 153], ['Computer', 123]];
    const rows = [
      { name: 'Avg. Disk sec/Read', color: '#f00', cls: 'selected' },
      { name: 'Avg. Disk sec/Write', color: '#0f0', cls: '' }
    ];
    this.attachShadow({ mode: 'open' }).innerHTML = `
      <style>
        :host { display: block; margin: 0 10px 11px; padding: 1px 1px 3px; border: 1px solid var(--edge);
                line-height: 15px; }
        table { width: 100%; table-layout: fixed; border-collapse: separate; border-spacing: 0; }
        th { height: 19px; box-sizing: border-box; padding: 0 0 0 6px; text-align: left; font-weight: 400;
             background: #fcfcfc; border: solid #e3e3e3; border-width: 1px 1px 1px 0; }
        th:last-child { border-right: 0; }
        td { height: 15px; padding: 0 0 0 4px; white-space: nowrap; }
        .selected td:not(:last-child) { background: #a0a0a0; }
        input { appearance: none; display: block; box-sizing: border-box; width: 14px; height: 14px; margin: 0;
                background: #fff; border: 1px solid; border-color: #696969 #e3e3e3 #e3e3e3 #696969; }
        input:checked::before { content: ""; display: block; width: 8px; height: 8px; margin: 2px; background: #000;
                clip-path: polygon(0 30%, 35% 60%, 100% 0, 100% 35%, 35% 95%, 0 65%); }
        hr { width: 53px; height: 1px; margin: 0; border: 0; }
      </style>
      <table>
        <colgroup>${columns.map(c => `<col style="width: ${c[1]}px">`).join('')}<col></colgroup>
        <thead><tr>${columns.map(c => `<th>${c[0]}</th>`).join('')}<th></th></tr></thead>
        <tbody>
          ${rows.map(r => `
            <tr class="${r.cls}">
              <td><input type="checkbox" checked aria-label="Show ${r.name}"></td>
              <td><hr style="background: ${r.color}"></td>
              <td>1000.0</td><td>${r.name}</td><td>5 M:</td><td>---</td><td>PhysicalDisk</td><td>\\\\HYPERVHOST2</td><td></td>
            </tr>`).join('')}
        </tbody>
      </table>
    `;
  }
}

customElements.define('pm-icon', PmIcon);
customElements.define('pm-window', PmWindow);
customElements.define('pm-title-bar', PmTitleBar);
customElements.define('pm-menu-bar', PmMenuBar);
customElements.define('pm-toolbar', PmToolbar);
customElements.define('pm-status-bar', PmStatusBar);
customElements.define('pm-tree', PmTree);
customElements.define('pm-tree-item', PmTreeItem);
customElements.define('pm-view', PmView);
customElements.define('pm-chart', PmChart);
customElements.define('pm-stats', PmStats);
customElements.define('pm-legend', PmLegend);
</script>
</body>
</html>
